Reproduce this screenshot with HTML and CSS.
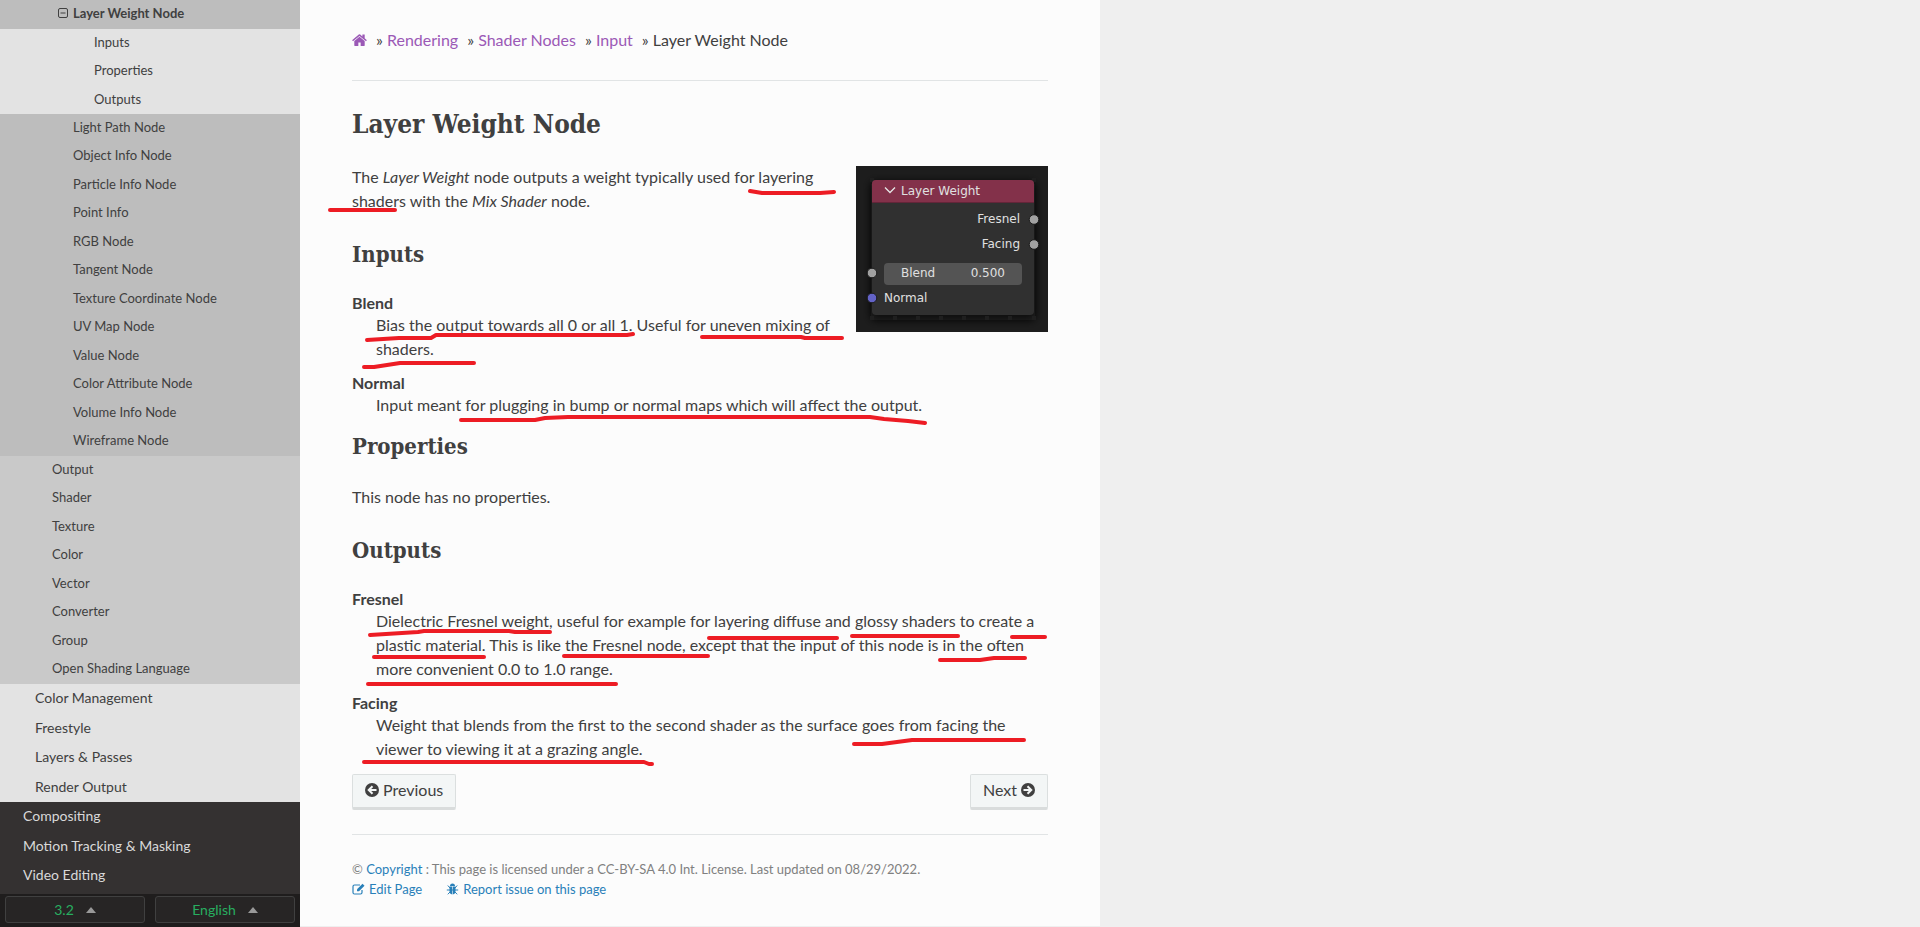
FILE: index.html
```html
<!DOCTYPE html>
<html lang="en">
<head>
<meta charset="utf-8">
<title>Layer Weight Node</title>
<link rel="stylesheet" href="styles.css">
</head>
<body>
<div class="page">
  <nav class="sidebar" aria-label="Contents">
    <div class="level-4 group">
      <a class="current" href="#"><svg class="toggle" viewBox="0 0 12 12" aria-hidden="true"><rect x="1.500" y="1.500" width="9" height="9" rx="1.500" fill="none" stroke="currentColor"/><path d="M3.500 6h5" stroke="currentColor"/></svg>Layer Weight Node</a>
    </div>
    <ul class="level-5 group">
      <li><a href="#inputs">Inputs</a></li>
      <li><a href="#properties">Properties</a></li>
      <li><a href="#outputs">Outputs</a></li>
    </ul>
    <ul class="level-4 group">
      <li><a href="#">Light Path Node</a></li>
      <li><a href="#">Object Info Node</a></li>
      <li><a href="#">Particle Info Node</a></li>
      <li><a href="#">Point Info</a></li>
      <li><a href="#">RGB Node</a></li>
      <li><a href="#">Tangent Node</a></li>
      <li><a href="#">Texture Coordinate Node</a></li>
      <li><a href="#">UV Map Node</a></li>
      <li><a href="#">Value Node</a></li>
      <li><a href="#">Color Attribute Node</a></li>
      <li><a href="#">Volume Info Node</a></li>
      <li><a href="#">Wireframe Node</a></li>
    </ul>
    <ul class="level-3 group">
      <li><a href="#">Output</a></li>
      <li><a href="#">Shader</a></li>
      <li><a href="#">Texture</a></li>
      <li><a href="#">Color</a></li>
      <li><a href="#">Vector</a></li>
      <li><a href="#">Converter</a></li>
      <li><a href="#">Group</a></li>
      <li><a href="#">Open Shading Language</a></li>
    </ul>
    <ul class="level-2 group top">
      <li><a href="#">Color Management</a></li>
      <li><a href="#">Freestyle</a></li>
      <li><a href="#">Layers &amp; Passes</a></li>
      <li><a href="#">Render Output</a></li>
    </ul>
    <ul class="level-1 group top">
      <li><a href="#">Compositing</a></li>
      <li><a href="#">Motion Tracking &amp; Masking</a></li>
      <li><a href="#">Video Editing</a></li>
    </ul>
    <div class="versions">
      <button type="button">3.2 <svg viewBox="0 0 10 6" aria-hidden="true"><path d="M0 6 5 0l5 6z" fill="#999"/></svg></button>
      <button type="button">English <svg viewBox="0 0 10 6" aria-hidden="true"><path d="M0 6 5 0l5 6z" fill="#999"/></svg></button>
    </div>
  </nav>

  <main class="content">
    <ul class="breadcrumbs">
      <li><a href="#" aria-label="Home"><svg class="home" viewBox="0 0 1664 1536" aria-hidden="true"><path fill="currentColor" d="M1408 992v480q0 26-19 45t-45 19H960v-384H704v384H320q-26 0-45-19t-19-45V992q0-1 .5-3t.5-3l575-474 575 474q1 2 1 6zm223-69-62 74q-8 9-21 11h-3q-13 0-21-7L832 424 140 1001q-12 8-24 7-13-2-21-11l-62-74q-8-10-7-23.500t11-21.500L756 279q32-26 76-26t76 26l244 204V288q0-14 9-23t23-9h192q14 0 23 9t9 23v408l219 182q10 8 11 21.500t-7 23.500z"/></svg></a></li>
      <li>» <a href="#">Rendering</a></li>
      <li>» <a href="#">Shader Nodes</a></li>
      <li>» <a href="#">Input</a></li>
      <li>» Layer Weight Node</li>
    </ul>
    <hr>
    <h1>Layer Weight Node</h1>
    <svg class="node" viewBox="0 0 192 166" role="img" aria-label="Layer Weight Node">
      <defs>
        <filter id="shade" x="-20%" y="-20%" width="140%" height="140%"><feGaussianBlur stdDeviation="4"/></filter>
      </defs>
      <rect width="192" height="166" fill="#1d1d1d"/>
      <rect x="15" y="16" width="164" height="138" rx="4" fill="#0c0c0c" filter="url(#shade)"/>
      <path fill="#1f1f1f" d="M14 150h4v4h-4zM37 150h4v4h-4zM60 150h4v4h-4zM83 150h4v4h-4zM106 150h4v4h-4zM129 150h4v4h-4zM152 150h4v4h-4zM176 150h4v4h-4zM14 12h4v4h-4zM176 12h4v4h-4z"/>
      <rect x="16" y="14" width="162" height="135" rx="4" fill="#303030"/>
      <path d="M16 37V18q0-4 4-4h154q4 0 4 4v19z" fill="#83314a"/>
      <path d="M16 36.500h162" stroke="#632539"/>
      <path d="M29 21.500l5 5 5-5" fill="none" stroke="#e6e6e6" stroke-width="1.300"/>
      <rect x="28" y="97" width="138" height="22" rx="4" fill="#545454"/>
      <g class="node-text">
        <text x="45" y="29">Layer Weight</text>
        <text x="164" y="57" text-anchor="end">Fresnel</text>
        <text x="164" y="82" text-anchor="end">Facing</text>
        <text x="45" y="111">Blend</text>
        <text x="149" y="111" text-anchor="end">0.500</text>
        <text x="28" y="136">Normal</text>
      </g>
      <g fill="#a1a1a1" stroke="#1a1a1a"><circle cx="178" cy="53.500" r="4.800"/><circle cx="178" cy="78.500" r="4.800"/><circle cx="16" cy="107" r="4.800"/><circle cx="16" cy="132" r="4.800" fill="#6363c7"/></g>
    </svg>
    <p>The <em>Layer Weight</em> node outputs a weight typically used for layering shaders with the <em>Mix Shader</em> node.</p>
    <h2 id="inputs">Inputs</h2>
    <dl>
      <dt>Blend</dt>
      <dd>Bias the output towards all 0 or all 1. Useful for uneven mixing of shaders.</dd>
      <dt>Normal</dt>
      <dd>Input meant for plugging in bump or normal maps which will affect the output.</dd>
    </dl>
    <h2 id="properties">Properties</h2>
    <p>This node has no properties.</p>
    <h2 id="outputs">Outputs</h2>
    <dl>
      <dt>Fresnel</dt>
      <dd>Dielectric Fresnel weight, useful for example for layering diffuse and glossy shaders to create a plastic material. This is like the Fresnel node, except that the input of this node is in the often more convenient 0.0 to 1.0 range.</dd>
      <dt>Facing</dt>
      <dd>Weight that blends from the first to the second shader as the surface goes from facing the viewer to viewing it at a grazing angle.</dd>
    </dl>
    <footer>
      <div class="pager">
        <a class="btn" href="#"><svg viewBox="0 0 14 14" aria-hidden="true"><circle cx="7" cy="7" r="7" fill="currentColor"/><path d="M11.500 7H4M7.500 3.200 3.700 7l3.800 3.800" fill="none" stroke="#f3f6f6" stroke-width="2"/></svg>Previous</a>
        <a class="btn" href="#">Next<svg viewBox="0 0 14 14" aria-hidden="true"><circle cx="7" cy="7" r="7" fill="currentColor"/><path d="M2.500 7H10M6.500 3.200 10.300 7l-3.800 3.800" fill="none" stroke="#f3f6f6" stroke-width="2"/></svg></a>
      </div>
      <hr>
      <p class="legal">© <a href="#">Copyright</a> : This page is licensed under a CC-BY-SA 4.0 Int. License. Last updated on 08/29/2022.</p>
      <div class="actions">
        <a href="#"><svg viewBox="0 0 13 12" aria-hidden="true"><path d="M10 7v2.500q0 1.500-1.500 1.500h-6Q1 11 1 9.500v-6Q1 2 2.500 2H8" fill="none" stroke="currentColor" stroke-width="1.200"/><path fill="currentColor" d="M5 6.200 10.500.7l2 2L7 8.200H5z"/></svg>Edit Page</a>
        <a href="#"><svg viewBox="0 0 12 12" aria-hidden="true"><path fill="currentColor" d="M3.500 3a2.500 2.500 0 0 1 5 0zM3 3.500h2.700v8Q3 11 3 8zM6.300 3.500H9V8q0 3-2.700 3.500z"/><path d="M.3 7h11.400M1.300 2.500 3.500 5M10.700 2.500 8.500 5M1.300 11.300 3.500 9M10.700 11.300 8.500 9" stroke="currentColor"/></svg>Report issue on this page</a>
      </div>
    </footer>
  </main>
  <svg class="marks" width="1100" height="926" aria-hidden="true">
    <g fill="none" stroke="#ed1c24" stroke-width="4" stroke-linecap="round" stroke-linejoin="round">
      <path d="M750 191l12 2h58l14-1"/>
      <path d="M330 210h65"/>
      <path d="M367 340l32-2h32l5-3h191l6-1"/>
      <path d="M702 337h99l4 1h37"/>
      <path d="M364 367h10l26-4h74"/>
      <path d="M461 420h74l10-2 23-1h302l14 2 24 2 17 2"/>
      <path d="M370 635l48-3 6-1h85l6 1h35"/>
      <path d="M709 638h128"/>
      <path d="M852 636h106"/>
      <path d="M1012 637h33"/>
      <path d="M374 657h110"/>
      <path d="M564 656h144"/>
      <path d="M940 660h40l14-2h31"/>
      <path d="M368 684h248"/>
      <path d="M854 744h28l30-4h112"/>
      <path d="M364 762h280l5 2h3"/>
    </g>
  </svg>
</div>
</body>
</html>
```
FILE: styles.css
```css
* { box-sizing: border-box; }

body {
  margin: 0;
  background: #efefef;
  color: #404040;
  font: 16px/24px Lato, "Noto Sans", sans-serif;
}

a { color: #2980b9; text-decoration: none; }
ul { list-style: none; margin: 0; padding: 0; }

.page {
  position: relative;
  display: flex;
  align-items: flex-start;
}

/* Sidebar */
.sidebar {
  flex: 0 0 300px;
  display: flex;
  flex-direction: column;
  min-height: 100vh;
  background: #343131;
}

.group { font-size: 13px; line-height: 26px; }
.group a { display: flex; align-items: center; padding-bottom: 2px; color: #404040; }
.group li:nth-child(even) a { padding-bottom: 3px; }

.level-5 { padding-left: 94px; background: #e3e3e3; }
.level-4 { padding-left: 73px; background: #bdbdbd; }
.level-3 { padding-left: 52px; background: #c9c9c9; }
.level-2 { padding-left: 35px; background: #e3e3e3; }
.level-1 { padding: 0 0 3px 23px; background: #343131; }

.top { font-size: 14px; line-height: 28px; }
.top li:nth-child(even) a { padding-bottom: 1px; }
.level-1 a { color: #d9d9d9; }

.group .current { margin-left: -16px; padding-bottom: 3px; font-weight: bold; }
.toggle { width: 12px; height: 12px; margin-right: 4px; }

.versions {
  display: flex;
  flex: 1;
  gap: 10px;
  padding: 2px 5px 4px;
  background: #1f1d1d;
}

.versions button {
  flex: 1;
  display: flex;
  align-items: center;
  justify-content: center;
  gap: 12px;
  padding: 0;
  border: 1px solid #404040;
  border-radius: 3px;
  background: #272525;
  color: #27ae60;
  font: inherit;
  font-size: 14px;
  line-height: 20px;
}

.versions svg { width: 10px; height: 6px; }

/* Article */
.content {
  flex: 0 1 800px;
  padding: 28px 52px 27px;
  background: #fcfcfc;
}

.breadcrumbs { display: flex; gap: 9px; padding-bottom: 4px; }
.breadcrumbs a { color: #9b59b6; }
.home { width: 15px; height: 14px; }

hr { height: 1px; margin: 24px 0; border: 0; background: #e1e4e5; }

h1, h2 {
  margin: 0 0 24px;
  padding-top: 2px;
  font-family: "Roboto Slab", "DejaVu Serif Condensed", "DejaVu Serif", serif;
  font-weight: bold;
}
h1 { font-size: 26px; line-height: 34px; }
h2 { font-size: 22px; line-height: 30px; }

p { margin: 0 0 24px; }
dl { margin: 0; }
dt { font-weight: bold; line-height: 20px; }
dd { margin: 0 0 12px 24px; }

.node { float: right; width: 192px; height: 166px; margin: 1px 0 0 16px; }
.node-text { font: 12px "DejaVu Sans", sans-serif; fill: #e0e0e0; }

/* Footer */
.pager { display: flex; justify-content: space-between; padding-top: 1px; }

.btn {
  display: flex;
  align-items: center;
  gap: 4px;
  padding: 3px 12px 5px;
  border: 1px solid #dbdfdf;
  border-bottom: 3px solid #d9dcdc;
  border-radius: 2px;
  background: #f3f6f6;
  color: #404040;
}
.btn svg { width: 14px; height: 14px; }

.legal, .actions { margin: 0; font-size: 13px; line-height: 20px; color: #808080; }
.actions { display: flex; gap: 24px; }
.actions a { display: flex; align-items: center; gap: 4px; }
.actions svg { width: 13px; height: 12px; }

/* Pen strokes drawn over the article */
.marks { position: absolute; top: 0; left: 0; pointer-events: none; }
```
